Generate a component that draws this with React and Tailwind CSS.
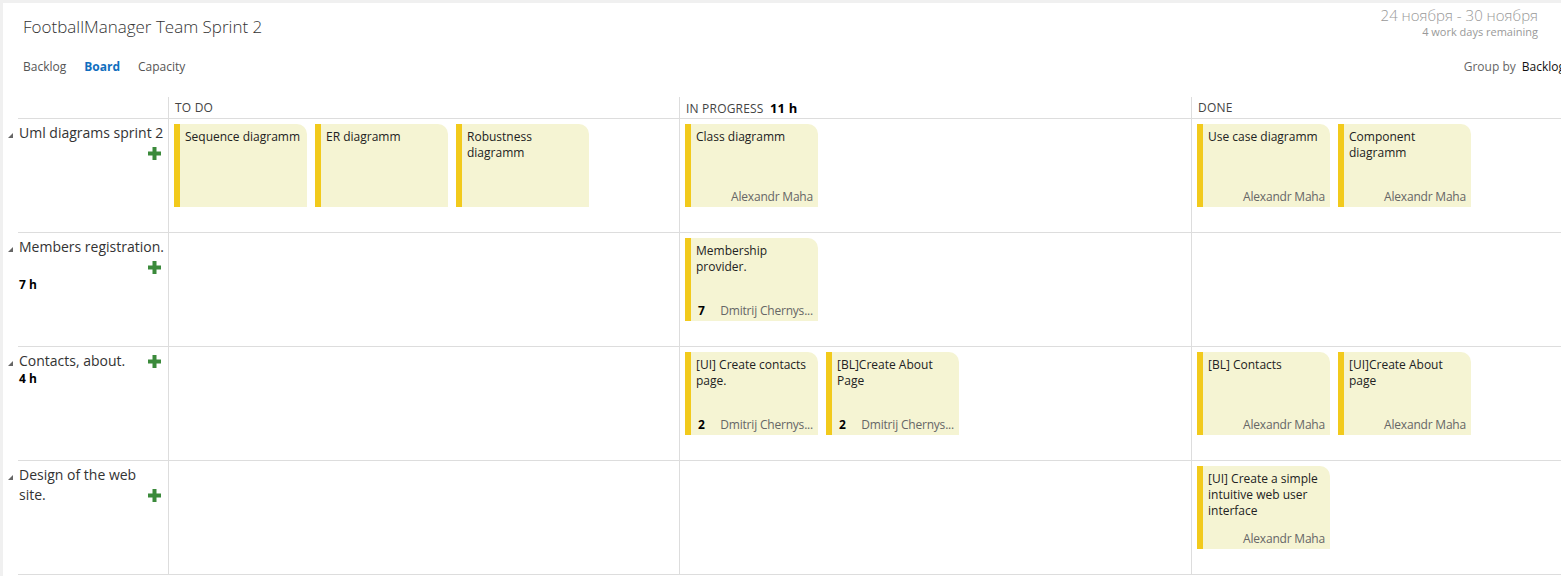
const FONT = { fontFamily: '"Open Sans", "Noto Sans", sans-serif' }

const rows = [
  {
    label: ['Uml diagrams sprint 2'],
    plus: 'below',
    cols: [
      [
        { title: ['Sequence diagramm'] },
        { title: ['ER diagramm'] },
        { title: ['Robustness', 'diagramm'] },
      ],
      [{ title: ['Class diagramm'], who: 'Alexandr Maha' }],
      [
        { title: ['Use case diagramm'], who: 'Alexandr Maha' },
        { title: ['Component', 'diagramm'], who: 'Alexandr Maha' },
      ],
    ],
  },
  {
    label: ['Members registration.'],
    plus: 'below',
    hours: '7 h',
    cols: [
      [],
      [{ title: ['Membership', 'provider.'], num: '7', who: 'Dmitrij Chernys...' }],
      [],
    ],
  },
  {
    label: ['Contacts, about.'],
    plus: 'inline',
    hours: '4 h',
    cols: [
      [],
      [
        { title: ['[UI] Create contacts', 'page.'], num: '2', who: 'Dmitrij Chernys...' },
        { title: ['[BL]Create About', 'Page'], num: '2', who: 'Dmitrij Chernys...' },
      ],
      [
        { title: ['[BL] Contacts'], who: 'Alexandr Maha' },
        { title: ['[UI]Create About', 'page'], who: 'Alexandr Maha' },
      ],
    ],
  },
  {
    label: ['Design of the web', 'site.'],
    plus: 'inline',
    cols: [
      [],
      [],
      [{ title: ['[UI] Create a simple', 'intuitive web user', 'interface'], who: 'Alexandr Maha' }],
    ],
  },
]

function Plus() {
  return (
    <svg width="13" height="13" viewBox="0 0 13 13" className="shrink-0">
      <rect x="4.5" y="0" width="4" height="13" fill="#3b8a3b" />
      <rect x="0" y="4.5" width="13" height="4" fill="#3b8a3b" />
    </svg>
  )
}

function Caret() {
  return (
    <svg width="5" height="5" viewBox="0 0 5 5">
      <polygon points="5,0 5,5 0,5" fill="#666" />
    </svg>
  )
}

function Card({ card }) {
  return (
    <div className="w-[133px] h-[83px] bg-[#f5f4d3] border-l-[6px] border-[#f2ca1c] rounded-tr-[10px] flex flex-col justify-between pl-[5px] pr-[5px] pt-[5px] pb-[2px] text-[12px] leading-[16px]">
      <div className="text-[#222]">
        {card.title.map((t) => (
          <div key={t}>{t}</div>
        ))}
      </div>
      {card.who && (
        <div className="flex items-center justify-between">
          <span className="font-bold text-black pl-[2px]">{card.num}</span>
          <span className="text-[#666] whitespace-nowrap tracking-[-0.2px]">{card.who}</span>
        </div>
      )}
    </div>
  )
}

function Label({ row }) {
  const last = row.label.length - 1
  return (
    <div className="pl-[1px] pr-[7px] pt-[4px] text-[14px] leading-[20px] text-[#333]">
      {row.label.map((line, i) =>
        i === last && row.plus === 'inline' ? (
          <div key={line} className="flex items-center justify-between">
            <span>{line}</span>
            <Plus />
          </div>
        ) : (
          <div key={line} className="whitespace-nowrap">{line}</div>
        )
      )}
      {row.plus === 'below' && (
        <div className="flex items-center justify-end h-[20px]">
          <Plus />
        </div>
      )}
      {row.hours && (
        <div className="text-[12px] leading-[16px] font-bold text-black">{row.hours}</div>
      )}
    </div>
  )
}

export default function App() {
  return (
    <div
      className="w-[1561px] h-[576px] overflow-hidden bg-white border-t-[3px] border-l-[3px] border-[#f0f0f0]"
      style={FONT}
    >
      <div className="pl-5 pr-[23px]">
        <div className="flex items-start justify-between">
          <h1 className="pt-[12px] text-[17px] leading-[24px] font-light text-[#333]">
            FootballManager Team Sprint 2
          </h1>
          <div className="pt-[2px] text-right text-[#999]">
            <div className="text-[15px] leading-[20px] font-light">24 ноября - 30 ноября</div>
            <div className="text-[11px] leading-[14px]">4 work days remaining</div>
          </div>
        </div>
        <div className="mt-[20px] flex items-center justify-between text-[12px] leading-[16px]">
          <nav className="flex gap-[18px]">
            <span className="text-[#555]">Backlog</span>
            <span className="text-[#106ebe] font-bold">Board</span>
            <span className="text-[#555]">Capacity</span>
          </nav>
          <div className="-mr-[27px] whitespace-nowrap">
            <span className="text-[#666]">Group by</span>
            <span className="ml-[6px] text-[#111]">Backlog</span>
          </div>
        </div>
      </div>

      <div className="mt-[22px] w-[1720px]">
        <div className="flex">
          <div className="w-[15px] shrink-0" />
          <div className="grid grid-cols-[150px_511px_512px_511px] border-b border-[#ddd] h-[22px] text-[12px] text-[#444] tracking-[0.2px]">
            <div />
            <div className="border-l border-[#ddd] pl-[6px] leading-[22px]">TO DO</div>
            <div className="border-l border-[#ddd] pl-[6px] leading-[22px]">
              IN PROGRESS <span className="ml-[3px] font-bold text-black text-[13px]">11 h</span>
            </div>
            <div className="border-l border-[#ddd] pl-[6px] leading-[22px]">DONE</div>
          </div>
        </div>

        {rows.map((row, ri) => (
          <div key={ri} className="flex">
            <div className="w-[15px] shrink-0 pl-[5px] pt-[14px]">
              <Caret />
            </div>
            <div className="grid grid-cols-[150px_511px_512px_511px] border-b border-[#ddd] h-[114px]">
              <Label row={row} />
              {row.cols.map((cards, ci) => (
                <div key={ci} className="border-l border-[#ddd] pl-[5px] pt-[5px] flex gap-2 items-start">
                  {cards.map((c, k) => (
                    <Card key={k} card={c} />
                  ))}
                </div>
              ))}
            </div>
          </div>
        ))}
      </div>
    </div>
  )
}
